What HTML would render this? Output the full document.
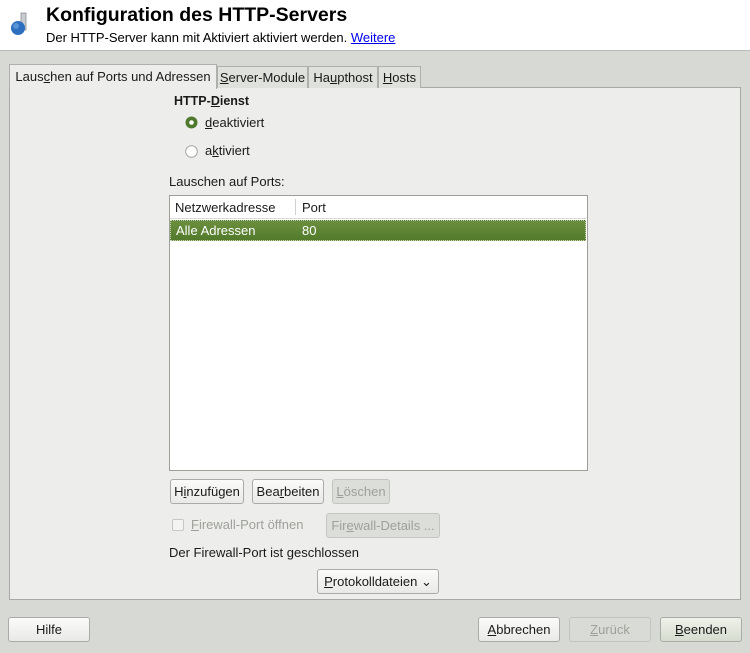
<!DOCTYPE html>
<html><head><meta charset="utf-8"><style>
*{box-sizing:border-box;margin:0;padding:0}
body{width:750px;height:653px;background:#d7d9d4;font-family:"Liberation Sans","DejaVu Sans",sans-serif;font-size:13px;color:#1a1a1a;position:relative;overflow:hidden}
.a{position:absolute;white-space:nowrap}
u{text-decoration:underline}
.hdr{left:0;top:0;width:750px;height:51px;background:#fff;border-bottom:1px solid #b9bcb6}
.btn{position:absolute;height:25px;border:1px solid #a9aca6;border-radius:3px;background:linear-gradient(#fbfbfa,#e9eae7);text-align:center;line-height:23px;font-size:13px;white-space:nowrap}
.dis{background:#dcdeda;color:#9ea09b;border-color:#c3c5c0}
.tab{position:absolute;top:66px;height:22px;border:1px solid #aeb1ab;border-bottom:none;background:#dfe1dc;line-height:21px;text-align:center;font-size:13px;white-space:nowrap}
</style></head><body>
<div class="a hdr"></div>
<svg class="a" style="left:8px;top:12px" width="22" height="26" viewBox="0 0 22 26"><rect x="13" y="1" width="5" height="17" fill="#c8ccd0" stroke="#8a8e94" stroke-width=".8"/><circle cx="10" cy="16" r="7" fill="#2f6fc0"/><circle cx="8" cy="14" r="3" fill="#6aa2e0" opacity=".7"/></svg>
<div class="a" style="left:46px;top:4px;font-size:19.5px;font-weight:bold;color:#000">Konfiguration des HTTP-Servers</div>
<div class="a" style="left:46px;top:30px;font-size:13px;color:#000">Der HTTP-Server kann mit Aktiviert aktiviert werden. <span style="color:#0000ee;text-decoration:underline">Weitere</span></div>

<div class="a" style="left:9px;top:87px;width:732px;height:513px;background:#edeeeb;border:1px solid #a7aaa4"></div>
<div class="tab" style="left:9px;width:208px;top:64px;height:25px;background:#edeeeb;z-index:2;line-height:24px">Laus<u>c</u>hen auf Ports und Adressen</div>
<div class="tab" style="left:217px;width:91px"><u>S</u>erver-Module</div>
<div class="tab" style="left:308px;width:70px">Ha<u>u</u>pthost</div>
<div class="tab" style="left:378px;width:43px"><u>H</u>osts</div>

<div class="a" style="left:174px;top:94px;font-weight:bold;font-size:12.5px">HTTP-<u>D</u>ienst</div>
<svg class="a" style="left:185px;top:116px" width="13" height="13"><circle cx="6.5" cy="6.5" r="6" fill="#4f7a2e"/><circle cx="6.5" cy="6.5" r="2.3" fill="#fff"/></svg>
<div class="a" style="left:205px;top:115px"><u>d</u>eaktiviert</div>
<svg class="a" style="left:185px;top:145px" width="13" height="13"><circle cx="6.5" cy="6.5" r="5.8" fill="#fff" stroke="#a4a7a1"/></svg>
<div class="a" style="left:205px;top:143px">a<u>k</u>tiviert</div>
<div class="a" style="left:169px;top:174px">Lauschen auf Ports:</div>

<div class="a" style="left:169px;top:195px;width:419px;height:276px;background:#fff;border:1px solid #9c9f9a"></div>
<div class="a" style="left:170px;top:196px;width:416px;height:23px;background:#fff;border-bottom:1px solid #d8dad5"></div>
<div class="a" style="left:175px;top:200px">Netzwerkadresse</div>
<div class="a" style="left:295px;top:199px;width:1px;height:16px;background:#d0d2cd"></div>
<div class="a" style="left:302px;top:200px">Port</div>
<div class="a" style="left:170px;top:220px;width:416px;height:21px;background:linear-gradient(#6b8f3f,#527a2b);border:1px dotted #c9d6b7"></div>
<div class="a" style="left:176px;top:223px;color:#fff">Alle Adressen</div>
<div class="a" style="left:302px;top:223px;color:#fff">80</div>

<div class="btn" style="left:170px;top:479px;width:74px">H<u>i</u>nzufügen</div>
<div class="btn" style="left:252px;top:479px;width:72px">Bea<u>r</u>beiten</div>
<div class="btn dis" style="left:332px;top:479px;width:58px"><u>L</u>öschen</div>
<div class="a" style="left:172px;top:519px;width:12px;height:12px;border:1px solid #c6c8c3;border-radius:2px;background:#f4f4f2"></div>
<div class="a" style="left:191px;top:517px;color:#9ea09b"><u>F</u>irewall-Port öffnen</div>
<div class="btn dis" style="left:326px;top:513px;width:114px">Fir<u>e</u>wall-Details ...</div>
<div class="a" style="left:169px;top:545px">Der Firewall-Port ist geschlossen</div>
<div class="btn" style="left:317px;top:569px;width:122px"><u>P</u>rotokolldateien &#8964;</div>

<div class="btn" style="left:8px;top:617px;width:82px">Hilfe</div>
<div class="btn" style="left:478px;top:617px;width:82px"><u>A</u>bbrechen</div>
<div class="btn dis" style="left:569px;top:617px;width:82px;background:#d9dbd6"><u>Z</u>urück</div>
<div class="btn" style="left:660px;top:617px;width:82px;background:linear-gradient(#eef1e9,#d6dccf)"><u>B</u>eenden</div>
</body></html>
